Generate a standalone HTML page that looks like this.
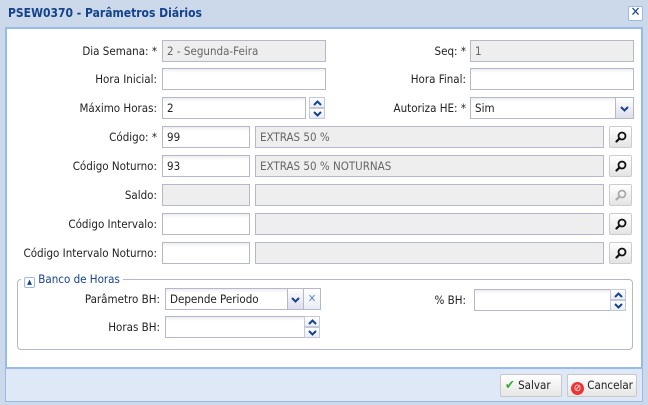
<!DOCTYPE html>
<html><head><meta charset="utf-8"><style>
*{box-sizing:border-box;margin:0;padding:0}
body{width:648px;height:405px;overflow:hidden;background:#cbd9ea;font-family:"DejaVu Sans Condensed","Liberation Sans",sans-serif;font-size:11.5px;color:#222;position:relative}
.a{position:absolute}
.title{left:8px;top:6px;font-weight:bold;color:#15428b;font-size:12px}
.close{left:628px;top:6px;width:15px;height:15px;border:1px solid #99bbe8;background:#fff;border-radius:2px;color:#15428b;font-size:13px;line-height:12px;text-align:center}
.bodyp{left:5px;top:27px;width:638px;height:342px;background:#fff;border:2px solid #99bbe8}
.foot{left:5px;top:369px;width:638px;height:33px;background:#dfe8f6;border:1px solid #99bbe8;border-top:none}
.lbl{text-align:right;line-height:22px;height:22px}
.in{height:22px;border:1px solid #b5b8c8;background:#fff linear-gradient(#eee,#fff 4px);padding-left:4px;line-height:20px}
.ro{background:#eee;color:#666}
.btn{width:23px;height:22px;border:1px solid #ccc;border-radius:2px;background:linear-gradient(#fff,#e4e4e4)}
.btn svg{position:absolute;left:5px;top:4px}
.spin{width:16px;height:22px}
.spin i{display:block;height:11px;position:relative;border:1px solid #c5c8d8;background:linear-gradient(#fff,#e8eef6)}
.spin svg{position:absolute;left:3px;top:2px}
fieldset{position:absolute;left:17px;top:279px;width:616px;height:71px;border:1px solid #b5b8c8;border-radius:4px}
.dd{border:1px solid #b5b8c8;background:linear-gradient(#fff,#dde)}
</style></head><body>
<svg width="0" height="0" style="position:absolute"><defs>
<symbol id="mag" viewBox="0 0 12 12"><circle cx="7" cy="5" r="3.5" fill="none" stroke="currentColor" stroke-width="1.8"/><path d="M4.5 7.5L1.5 10.5" stroke="currentColor" stroke-width="2.2" stroke-linecap="round"/></symbol>
<symbol id="up" viewBox="0 0 9 6"><path d="M1 5L4.5 1.5L8 5" fill="none" stroke="#15428b" stroke-width="2"/></symbol>
<symbol id="dn" viewBox="0 0 9 6"><path d="M1 1L4.5 4.5L8 1" fill="none" stroke="#15428b" stroke-width="2"/></symbol>
</defs></svg>
<div class="a title">PSEW0370 - Parâmetros Diários</div>
<div class="a close">✕</div>
<div class="a bodyp"></div>
<div class="a foot"></div>

<div class="a lbl" style="left:0;width:157px;top:40px">Dia Semana: *</div>
<div class="a in ro" style="left:162px;top:40px;width:164px">2 - Segunda-Feira</div>
<div class="a lbl" style="left:300px;width:166px;top:40px">Seq: *</div>
<div class="a in ro" style="left:470px;top:40px;width:164px">1</div>

<div class="a lbl" style="left:0;width:157px;top:68px">Hora Inicial:</div>
<div class="a in" style="left:162px;top:68px;width:164px"></div>
<div class="a lbl" style="left:300px;width:166px;top:68px">Hora Final:</div>
<div class="a in" style="left:470px;top:68px;width:164px"></div>

<div class="a lbl" style="left:0;width:157px;top:97px">Máximo Horas:</div>
<div class="a in" style="left:162px;top:97px;width:144px">2</div>
<div class="a spin" style="left:309px;top:97px"><i><svg width="9" height="6"><use href="#up"/></svg></i><i><svg width="9" height="6"><use href="#dn"/></svg></i></div>
<div class="a lbl" style="left:300px;width:166px;top:97px">Autoriza HE: *</div>
<div class="a in" style="left:470px;top:97px;width:164px">Sim</div>
<div class="a dd" style="left:615px;top:97px;width:19px;height:22px"><svg width="9" height="6" style="position:absolute;left:4px;top:8px"><use href="#dn"/></svg></div>

<div class="a lbl" style="left:0;width:157px;top:126px">Código: *</div>
<div class="a in" style="left:162px;top:126px;width:88px">99</div>
<div class="a in ro" style="left:255px;top:126px;width:349px">EXTRAS 50 %</div>
<div class="a btn" style="left:609px;top:126px;color:#111"><svg width="12" height="12"><use href="#mag"/></svg></div>

<div class="a lbl" style="left:0;width:157px;top:155px">Código Noturno:</div>
<div class="a in" style="left:162px;top:155px;width:88px">93</div>
<div class="a in ro" style="left:255px;top:155px;width:349px">EXTRAS 50 % NOTURNAS</div>
<div class="a btn" style="left:609px;top:155px;color:#111"><svg width="12" height="12"><use href="#mag"/></svg></div>

<div class="a lbl" style="left:0;width:157px;top:184px">Saldo:</div>
<div class="a in ro" style="left:162px;top:184px;width:88px"></div>
<div class="a in ro" style="left:255px;top:184px;width:349px"></div>
<div class="a btn" style="left:609px;top:184px;color:#aaa"><svg width="12" height="12"><use href="#mag"/></svg></div>

<div class="a lbl" style="left:0;width:157px;top:213px">Código Intervalo:</div>
<div class="a in" style="left:162px;top:213px;width:88px"></div>
<div class="a in ro" style="left:255px;top:213px;width:349px"></div>
<div class="a btn" style="left:609px;top:213px;color:#111"><svg width="12" height="12"><use href="#mag"/></svg></div>

<div class="a lbl" style="left:0;width:157px;top:242px">Código Intervalo Noturno:</div>
<div class="a in" style="left:162px;top:242px;width:88px"></div>
<div class="a in ro" style="left:255px;top:242px;width:349px"></div>
<div class="a btn" style="left:609px;top:242px;color:#111"><svg width="12" height="12"><use href="#mag"/></svg></div>

<fieldset></fieldset>
<div class="a" style="left:21px;top:272px;background:#fff;padding:0 3px;height:14px;line-height:14px;color:#15428b">
<span style="display:inline-block;width:11px;height:11px;border:1px solid #99bbe8;border-radius:2px;font-size:7px;line-height:9px;text-align:center;vertical-align:-1px">▲</span> Banco de Horas</div>

<div class="a lbl" style="left:0;width:160px;top:288px">Parâmetro BH:</div>
<div class="a in" style="left:165px;top:288px;width:124px">Depende Periodo</div>
<div class="a dd" style="left:287px;top:288px;width:17px;height:22px"><svg width="9" height="6" style="position:absolute;left:3px;top:8px"><use href="#dn"/></svg></div>
<div class="a" style="left:303px;top:288px;width:18px;height:22px;border:1px solid #b5b8c8;background:linear-gradient(#fff,#e8eef6);color:#6688bb;font-size:11px;font-weight:bold;text-align:center;line-height:20px">✕</div>
<div class="a lbl" style="left:300px;width:166px;top:289px">% BH:</div>
<div class="a in" style="left:474px;top:289px;width:140px"></div>
<div class="a spin" style="left:610px;top:289px"><i><svg width="9" height="6"><use href="#up"/></svg></i><i><svg width="9" height="6"><use href="#dn"/></svg></i></div>

<div class="a lbl" style="left:0;width:160px;top:316px">Horas BH:</div>
<div class="a in" style="left:165px;top:316px;width:140px"></div>
<div class="a spin" style="left:304px;top:316px"><i><svg width="9" height="6"><use href="#up"/></svg></i><i><svg width="9" height="6"><use href="#dn"/></svg></i></div>

<div class="a" style="left:500px;top:374px;width:62px;height:23px;border:1px solid #c8c8c8;border-radius:2px;background:linear-gradient(#fff,#e6e6e6);line-height:21px;padding-left:4px"><span style="color:#3a3;font-weight:bold;font-size:13px">✔</span> Salvar</div>
<div class="a" style="left:567px;top:374px;width:70px;height:23px;border:1px solid #c8c8c8;border-radius:2px;background:linear-gradient(#fff,#e6e6e6);line-height:21px;padding-left:3px"><span style="display:inline-block;width:13px;height:13px;border-radius:50%;background:#e33;color:#fff;font-size:10px;line-height:13px;text-align:center;vertical-align:-2px">⊘</span> Cancelar</div>
</body></html>
